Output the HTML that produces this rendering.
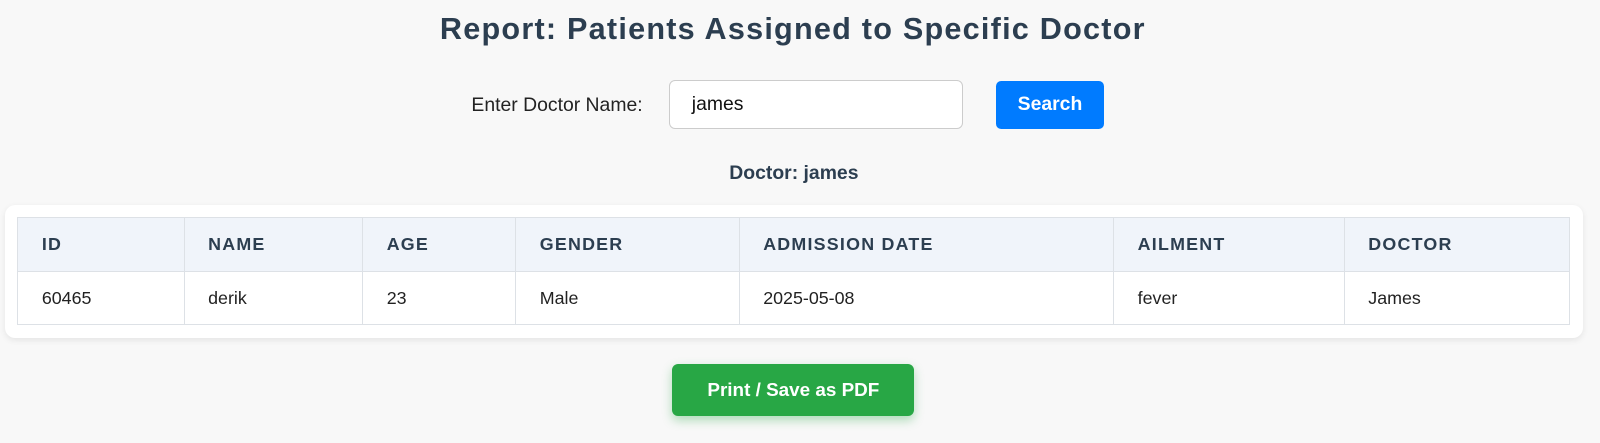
<!DOCTYPE html>
<html><head><meta charset="utf-8"><style>
body{margin:0;width:1600px;height:443px;background:#f8f8f8;font-family:"Liberation Sans",Arial,sans-serif;position:relative;overflow:hidden}
#w{position:absolute;left:0;top:0;width:1568px;height:434px;zoom:1.0204}
.a{position:absolute}
h1{position:absolute;left:0;width:1554px;top:12px;margin:0;text-align:center;font-size:30px;letter-spacing:1.2px;color:#2c3e50;font-weight:bold}
.lbl{left:462px;top:92px;font-size:19px;color:#222}
.inp{left:656px;top:78px;width:286px;height:46px;background:#fff;border:1px solid #ccc;border-radius:6px;font-size:19px;line-height:46px;box-sizing:content-box}
.inp span{margin-left:21px;color:#111}
.btn{left:976px;top:79px;width:106px;height:47px;background:#007bff;border-radius:5px;color:#fff;font-weight:bold;font-size:19px;text-align:center;line-height:47px}
.doc{left:0;width:1556px;top:159px;text-align:center;font-weight:bold;font-size:19px;color:#2c3e50}
.card{left:5px;top:201px;width:1546px;height:130px;background:#fff;border-radius:10px;box-shadow:0 2px 6px rgba(0,0,0,.08)}
table{position:absolute;left:17px;top:213px;width:1522px;border-collapse:collapse;font-size:17.5px}
td,th{border:1px solid #dde1e6;text-align:left;padding:0 0 0 23px}
th{background:#f0f4fa;height:52px;color:#2c3e50;letter-spacing:1.2px;font-size:17.5px}
td{height:51px;color:#222}
.pr{left:659px;top:357px;width:237px;height:51px;background:#28a745;border-radius:6px;color:#fff;font-weight:bold;font-size:18.5px;text-align:center;line-height:51px;box-shadow:0 4px 10px rgba(40,167,69,.35)}
</style></head><body><div id="w">
<h1>Report: Patients Assigned to Specific Doctor</h1>
<div class="a lbl">Enter Doctor Name:</div>
<div class="a inp"><span>james</span></div>
<div class="a btn">Search</div>
<div class="a doc">Doctor: james</div>
<div class="a card"></div>
<table>
<colgroup><col style="width:163px"><col style="width:175px"><col style="width:150px"><col style="width:219px"><col style="width:367px"><col style="width:226px"><col></colgroup>
<tr><th>ID</th><th>NAME</th><th>AGE</th><th>GENDER</th><th>ADMISSION DATE</th><th>AILMENT</th><th>DOCTOR</th></tr>
<tr><td>60465</td><td>derik</td><td>23</td><td>Male</td><td>2025-05-08</td><td>fever</td><td>James</td></tr>
</table>
<div class="a pr">Print / Save as PDF</div>
</div></body></html>
